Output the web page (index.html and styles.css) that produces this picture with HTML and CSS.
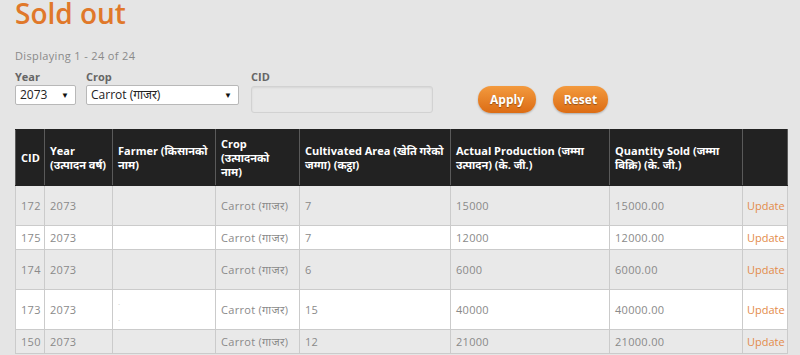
FILE: index.html
```html
<!DOCTYPE html>
<html lang="en">
<head>
  <meta charset="UTF-8">
  <title>Sold out</title>
  <link rel="stylesheet" href="styles.css">
</head>
<body>
  <div class="page">
    <h1 class="title">Sold out</h1>
    <p class="count">Displaying 1 - 24 of 24</p>

    <div class="filters">
      <div class="field">
        <label>Year</label>
        <div class="select year-select">2073</div>
      </div>
      <div class="field">
        <label>Crop</label>
        <div class="select crop-select">Carrot (गाजर)</div>
      </div>
      <div class="field">
        <label>CID</label>
        <input type="text" class="cid-input">
      </div>
      <button class="btn apply-btn">Apply</button>
      <button class="btn reset-btn">Reset</button>
    </div>

    <table class="grid">
      <colgroup>
        <col style="width:29px">
        <col style="width:68px">
        <col style="width:103px">
        <col style="width:84px">
        <col style="width:151px">
        <col style="width:159px">
        <col style="width:133px">
        <col style="width:45px">
      </colgroup>
      <thead>
        <tr>
          <th>CID</th>
          <th>Year<br>(उत्पादन वर्ष)</th>
          <th>Farmer (किसानको<br>नाम)</th>
          <th>Crop<br>(उत्पादनको<br>नाम)</th>
          <th>Cultivated Area (खेति गरेको<br>जग्गा) (कट्ठा)</th>
          <th>Actual Production (जम्मा<br>उत्पादन) (के. जी.)</th>
          <th>Quantity Sold (जम्मा<br>बिक्रि) (के. जी.)</th>
          <th></th>
        </tr>
      </thead>
      <tbody>
        <tr>
          <td>172</td><td>2073</td><td>&nbsp;<br>&nbsp;</td><td>Carrot (गाजर)</td>
          <td>7</td><td>15000</td><td>15000.00</td><td><a href="#">Update</a></td>
        </tr>
        <tr>
          <td>175</td><td>2073</td><td></td><td>Carrot (गाजर)</td>
          <td>7</td><td>12000</td><td>12000.00</td><td><a href="#">Update</a></td>
        </tr>
        <tr>
          <td>174</td><td>2073</td><td>&nbsp;<br>&nbsp;</td><td>Carrot (गाजर)</td>
          <td>6</td><td>6000</td><td>6000.00</td><td><a href="#">Update</a></td>
        </tr>
        <tr>
          <td>173</td><td>2073</td><td class="faded">.<br>.</td><td>Carrot (गाजर)</td>
          <td>15</td><td>40000</td><td>40000.00</td><td><a href="#">Update</a></td>
        </tr>
        <tr>
          <td>150</td><td>2073</td><td></td><td>Carrot (गाजर)</td>
          <td>12</td><td>21000</td><td>21000.00</td><td><a href="#">Update</a></td>
        </tr>
      </tbody>
    </table>
  </div>
</body>
</html>
```

FILE: styles.css
```css
body {
  margin: 0;
  background: #e5e5e5;
  font-family: "Open Sans", "Noto Sans Devanagari", "Noto Sans", sans-serif;
  color: #8a8a8a;
  font-size: 11px;
}

.page {
  padding: 0 13px 0 15px;
}

.title {
  margin: 0;
  font-size: 28px;
  line-height: 26px;
  font-weight: 600;
  color: #e0782a;
}

.count {
  margin: 22px 0 0;
  line-height: 15px;
  letter-spacing: 0.35px;
}

.filters {
  display: flex;
  align-items: flex-start;
  margin-top: 6px;
}

.field {
  display: flex;
  flex-direction: column;
  margin-right: 10px;
}

.field label {
  font-weight: bold;
  color: #666;
  line-height: 15px;
  margin-bottom: 1px;
}

.select {
  position: relative;
  box-sizing: border-box;
  height: 20px;
  line-height: 18px;
  padding: 0 4px;
  background: #fff;
  border: 1px solid #b8b8b8;
  border-radius: 2px;
  font-size: 12px;
  color: #222;
}

.select::after {
  content: "▼";
  position: absolute;
  right: 6px;
  top: 0;
  font-size: 8px;
  color: #111;
}

.year-select {
  width: 61px;
}

.crop-select {
  width: 153px;
  margin-right: 2px;
}

.cid-input {
  box-sizing: border-box;
  width: 182px;
  height: 27px;
  margin-top: 1px;
  background: #e7e7e7;
  border: 1px solid #d2d2d2;
  border-radius: 3px;
  box-shadow: inset 0 1px 2px rgba(0, 0, 0, 0.08);
}

.btn {
  height: 27px;
  margin-top: 17px;
  padding: 0;
  border: none;
  border-radius: 13px;
  background: linear-gradient(#f39a3e, #dc6c14);
  color: #fff;
  font-family: "Open Sans", sans-serif;
  font-weight: bold;
  font-size: 12px;
  text-shadow: 0 1px 1px rgba(0, 0, 0, 0.35);
  box-shadow: 0 1px 2px rgba(0, 0, 0, 0.25);
  cursor: pointer;
}

.apply-btn {
  width: 58px;
  margin-left: 35px;
}

.reset-btn {
  width: 55px;
  margin-left: 17px;
}

.grid {
  margin-top: 16px;
  width: 772px;
  border-collapse: collapse;
  table-layout: fixed;
}

.grid th {
  background: #222;
  color: #fff;
  font-weight: bold;
  text-align: left;
  line-height: 14px;
  padding: 7px 5px 6px;
  border: 1px solid #5a5a5a;
  border-top-color: #222;
  border-bottom-color: #222;
  vertical-align: middle;
  white-space: nowrap;
}

.grid td {
  line-height: 16px;
  padding: 4px 5px 3px;
  border: 1px solid #cbcbcb;
  vertical-align: middle;
  white-space: nowrap;
  letter-spacing: 0.3px;
}

.grid tbody tr:nth-child(odd) {
  background: #e9e9e9;
}

.grid tbody tr:nth-child(even) {
  background: #fff;
}

.grid td:last-child {
  padding: 4px 0 3px 4px;
  letter-spacing: 0;
  overflow: hidden;
}

.grid a {
  color: #e38b4a;
  text-decoration: none;
}

.faded {
  color: #ccc;
  font-size: 8px;
}
```
